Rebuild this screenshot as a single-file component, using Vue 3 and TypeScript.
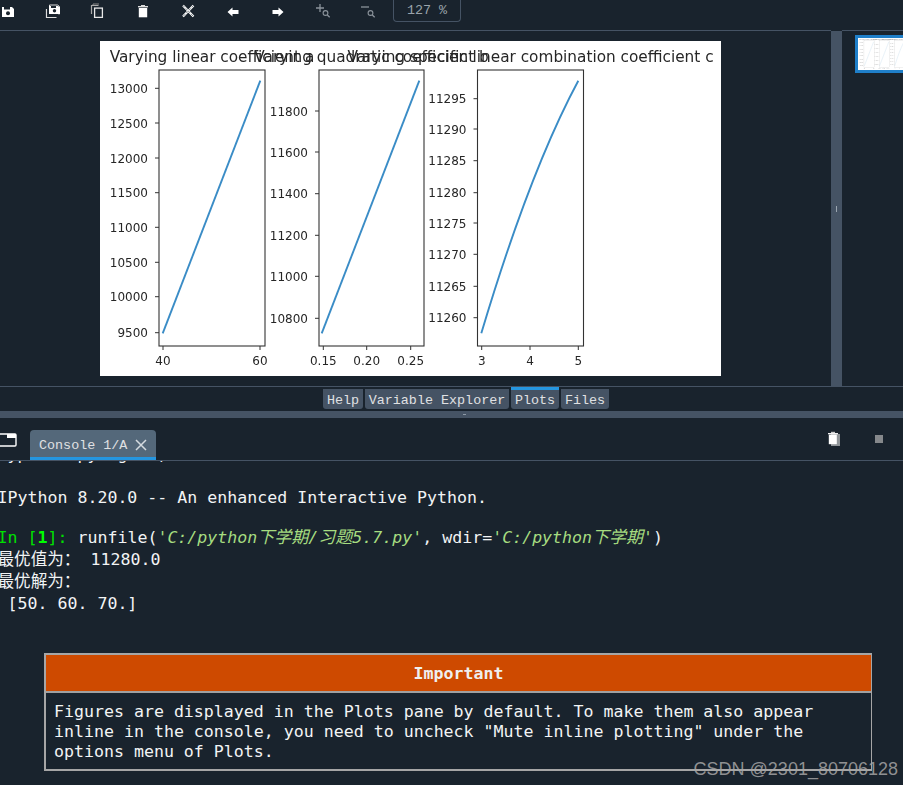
<script setup lang="ts">
interface Axis {
  left: number
  right: number
  title: string
  curve: string
  yTicks: { y: number; label: string }[]
  xTicks: { x: number; label: string }[]
}

const top = 70
const bottom = 346

const axes: Axis[] = [
  {
    left: 159,
    right: 265,
    title: 'Varying linear coefficient a',
    curve: 'M162.7 333.3 L260.3 80.7',
    yTicks: [
      { y: 88.3, label: '13000' },
      { y: 123, label: '12500' },
      { y: 158, label: '12000' },
      { y: 192.7, label: '11500' },
      { y: 227.3, label: '11000' },
      { y: 262.3, label: '10500' },
      { y: 296.7, label: '10000' },
      { y: 332.7, label: '9500' }
    ],
    xTicks: [
      { x: 163, label: '40' },
      { x: 260, label: '60' }
    ]
  },
  {
    left: 319,
    right: 424,
    title: 'Varying quadratic coefficient b',
    curve: 'M321.7 333.3 L419.3 80.7',
    yTicks: [
      { y: 111, label: '11800' },
      { y: 152, label: '11600' },
      { y: 193.7, label: '11400' },
      { y: 235.3, label: '11200' },
      { y: 276.3, label: '11000' },
      { y: 318.3, label: '10800' }
    ],
    xTicks: [
      { x: 323.3, label: '0.15' },
      { x: 366.7, label: '0.20' },
      { x: 410.7, label: '0.25' }
    ]
  },
  {
    left: 477.5,
    right: 583.5,
    title: 'Varying specific linear combination coefficient c',
    curve: 'M481.3 333.3 Q529.8 171 578.3 80.7',
    yTicks: [
      { y: 98.7, label: '11295' },
      { y: 129, label: '11290' },
      { y: 160.7, label: '11285' },
      { y: 192.7, label: '11280' },
      { y: 223, label: '11275' },
      { y: 254.3, label: '11270' },
      { y: 286.3, label: '11265' },
      { y: 317.7, label: '11260' }
    ],
    xTicks: [
      { x: 481.7, label: '3' },
      { x: 530, label: '4' },
      { x: 578.3, label: '5' }
    ]
  }
]

const tabs = [
  { name: 'Help', width: 40, active: false },
  { name: 'Variable Explorer', width: 144, active: false },
  { name: 'Plots', width: 48, active: true },
  { name: 'Files', width: 48, active: false }
]

const noticeLines = [
  'Figures are displayed in the Plots pane by default. To make them also appear',
  'inline in the console, you need to uncheck "Mute inline plotting" under the',
  'options menu of Plots.'
]
</script>

<template>
  <div class="app">
    <header class="toolbar">
      <button class="tool">
        <svg viewBox="0 0 16 16"><path d="M2 5h10l2 2v8H2z" fill="#fff" /><rect x="4" y="5" width="6" height="2.5" fill="#19232d" /><circle cx="8" cy="11.2" r="2" fill="#19232d" /></svg>
      </button>
      <button class="tool">
        <svg viewBox="0 0 16 16"><path d="M4.5 4V3h8l2 1.5V12h-1" fill="none" stroke="#ddd" stroke-width="1" /><path d="M4 4h9l2 1.5V12H4z" fill="#fff" /><rect x="6" y="4" width="5" height="2" fill="#19232d" /><circle cx="9.5" cy="8.8" r="1.7" fill="#19232d" /><path d="M1.5 7v8.5h10" fill="none" stroke="#ddd" stroke-width="1.2" /><path d="M3 6v8h10" fill="none" stroke="#19232d" stroke-width="1" /></svg>
      </button>
      <button class="tool">
        <svg viewBox="0 0 16 16"><path d="M1.5 12V3.5h7" fill="none" stroke="#aaa" stroke-width="1.2" /><rect x="4.6" y="6.1" width="7.8" height="9.3" fill="none" stroke="#e8e8e8" stroke-width="1.3" /><path d="M3 3V2h6" fill="none" stroke="#888" stroke-width="1" /></svg>
      </button>
      <button class="tool">
        <svg viewBox="0 0 16 16"><rect x="3" y="4" width="10" height="1.4" fill="#ddd" /><rect x="6" y="3" width="4" height="1.2" fill="#ddd" /><path d="M3.8 6h8.4v9.3H3.8z" fill="#fff" /></svg>
      </button>
      <button class="tool">
        <svg viewBox="0 0 16 16"><path d="M3 3.5L13.5 14.5M13.5 3.5L3 14.5" stroke="#fff" stroke-width="2.2" /><path d="M3 3.5L13.5 14.5M13.5 3.5L3 14.5" stroke="#19232d" stroke-width="0.6" stroke-dasharray="2.5 1.5" /></svg>
      </button>
      <button class="tool">
        <svg viewBox="0 0 16 16"><path d="M2.5 10L7.5 5.5v2.5h6v4h-6v2.5z" fill="#fff" /></svg>
      </button>
      <button class="tool">
        <svg viewBox="0 0 16 16"><path d="M13.5 10L8.5 5.5v2.5h-6v4h6v2.5z" fill="#fff" /></svg>
      </button>
      <button class="tool">
        <svg viewBox="0 0 16 16"><path d="M5 2v8M1 6h8" stroke="#8b939b" stroke-width="1.3" /><circle cx="10.5" cy="11" r="2.4" fill="none" stroke="#8b939b" stroke-width="1.1" /><path d="M12.3 13l2.4 2.2" stroke="#8b939b" stroke-width="1.3" /></svg>
      </button>
      <button class="tool">
        <svg viewBox="0 0 16 16"><path d="M1 5h8" stroke="#8b939b" stroke-width="1.3" /><circle cx="10.5" cy="11" r="2.4" fill="none" stroke="#8b939b" stroke-width="1.1" /><path d="M12.3 13l2.4 2.2" stroke="#8b939b" stroke-width="1.3" /></svg>
      </button>
      <div class="zoom-box">127 %</div>
    </header>

    <section class="plots">
      <div class="canvas-pane">
        <svg class="figure" viewBox="100 41 621 335" width="621" height="335">
          <g id="fig">
            <rect x="100" y="41" width="621" height="335" fill="#fff" />
            <g v-for="axis in axes" :key="axis.title">
              <rect :x="axis.left" :y="top" :width="axis.right - axis.left" :height="bottom - top" fill="none" stroke="#333" stroke-width="1.1" />
              <path :d="axis.curve" fill="none" stroke="#3a8cc6" stroke-width="1.9" />
              <text class="title" :x="(axis.left + axis.right) / 2" y="62" text-anchor="middle">{{ axis.title }}</text>
              <g v-for="t in axis.yTicks" :key="t.label">
                <path :d="`M${axis.left - 4} ${t.y}H${axis.left}`" stroke="#333" stroke-width="1" />
                <text class="tick" :x="axis.left - 11" :y="t.y + 4.5" text-anchor="end">{{ t.label }}</text>
              </g>
              <g v-for="t in axis.xTicks" :key="t.label">
                <path :d="`M${t.x} ${bottom}v4`" stroke="#333" stroke-width="1" />
                <text class="tick" :x="t.x" y="365" text-anchor="middle">{{ t.label }}</text>
              </g>
            </g>
          </g>
        </svg>
      </div>
      <div class="splitter-v"><span class="grip-v"></span></div>
      <div class="thumb-pane">
        <div class="thumb">
          <svg viewBox="100 41 621 335" width="60" height="32"><use href="#fig" opacity="0.6" /></svg>
        </div>
      </div>
    </section>

    <nav class="tabs">
      <div
        v-for="tab in tabs"
        :key="tab.name"
        class="tab"
        :class="{ active: tab.active }"
        :style="{ width: tab.width + 'px' }"
      >{{ tab.name }}</div>
    </nav>

    <div class="splitter-h"><span class="grip-h"></span></div>

    <div class="console-bar">
      <svg class="window-icon" viewBox="0 0 17 14" width="17" height="14">
        <rect x="-1" y="1" width="17" height="12" rx="1" fill="none" stroke="#fff" stroke-width="1.4" />
        <rect x="7" y="1" width="9" height="4" fill="#fff" />
      </svg>
      <div class="console-tab">
        <span>Console 1/A</span>
        <svg viewBox="0 0 12 12" width="12" height="12"><path d="M1 1L11 11M11 1L1 11" stroke="#d5dbe0" stroke-width="1.5" /></svg>
      </div>
      <div class="console-actions">
        <svg viewBox="0 0 14 16" width="14" height="16">
          <rect x="4" y="3" width="9" height="12" fill="#8f9498" />
          <rect x="1" y="2" width="10" height="1.3" fill="#eee" />
          <rect x="4" y="0.8" width="4" height="1.2" fill="#ccc" />
          <rect x="1.8" y="3.6" width="8" height="9.6" fill="#fff" />
        </svg>
        <span class="stop"></span>
      </div>
    </div>

    <main class="console">
      <div class="row first">Type "copyright", "credits" or "license" for more information.</div>
      <div class="row spacer"></div>
      <div class="row">IPython 8.20.0 -- An enhanced Interactive Python.</div>
      <div class="row short"></div>
      <div class="row"><span class="prompt">In [<b>1</b>]: </span>runfile(<i class="str">'C:/python<span class="han">下学期</span>/<span class="han">习题</span>5.7.py'</i>, wdir=<i class="str">'C:/python<span class="han">下学期</span>'</i>)</div>
      <div class="row cjk gap">最优值为： 11280.0</div>
      <div class="row cjk">最优解为：</div>
      <div class="row gap"> [50. 60. 70.]</div>

      <aside class="notice">
        <div class="notice-head">Important</div>
        <div class="notice-body">
          <div v-for="line in noticeLines" :key="line" class="notice-line">{{ line }}</div>
        </div>
      </aside>
    </main>

    <div class="watermark">CSDN @2301_80706128</div>
  </div>
</template>

<style scoped>
.app {
  position: relative;
  width: 903px;
  height: 785px;
  overflow: hidden;
  background: #19232d;
  display: flex;
  flex-direction: column;
}

.toolbar {
  height: 30px;
  box-sizing: border-box;
  display: flex;
  align-items: flex-start;
  gap: 29px;
  flex: none;
}
.tool {
  width: 16px;
  height: 16px;
  margin-top: 2px;
  padding: 0;
  border: 0;
  background: none;
  display: block;
}
.tool svg {
  display: block;
  width: 16px;
  height: 16px;
}
.zoom-box {
  width: 68px;
  height: 22px;
  box-sizing: border-box;
  margin-left: -12px;
  border: 1px solid #455364;
  border-top: 0;
  border-radius: 0 0 4px 4px;
  color: #9aa3ab;
  font: 13.4px/22px "Liberation Mono", monospace;
  text-align: center;
}

.plots {
  height: 357px;
  flex: none;
  display: flex;
}
.canvas-pane {
  width: 831px;
  flex: none;
  box-sizing: border-box;
  border-top: 1px solid #455364;
  border-bottom: 1px solid #455364;
  padding: 10px 0 0 100px;
}
.figure {
  display: block;
  filter: blur(0.4px);
}
.title {
  font: 15.3px "DejaVu Sans", sans-serif;
  fill: #262626;
}
.tick {
  font: 12px "DejaVu Sans", sans-serif;
  fill: #262626;
}
.splitter-v {
  width: 11px;
  flex: none;
  margin-top: 1px;
  background: #455364;
  display: flex;
  align-items: center;
  justify-content: center;
}
.grip-v {
  width: 1px;
  height: 6px;
  background: #9aa5b0;
}
.thumb-pane {
  flex: 1;
  min-width: 0;
  overflow: hidden;
  box-sizing: border-box;
  border-top: 1px solid #455364;
  border-bottom: 1px solid #455364;
  padding: 4px 0 0 13px;
}
.thumb {
  width: 60px;
  height: 32px;
  border: 3px solid #1f7fc9;
  background: #fff;
}
.thumb svg {
  display: block;
}

.tabs {
  height: 24px;
  flex: none;
  box-sizing: border-box;
  padding: 0 0 2px 323px;
  display: flex;
  align-items: flex-end;
  gap: 2px;
}
.tab {
  height: 20px;
  box-sizing: border-box;
  background: #455364;
  border-radius: 0 0 3px 3px;
  color: #e0e1e3;
  font: 13.4px/23px "Liberation Mono", monospace;
  text-align: center;
  white-space: nowrap;
}
.tab.active {
  height: 22px;
  border-top: 3px solid #2596e0;
  line-height: 21px;
}

.splitter-h {
  height: 7px;
  flex: none;
  box-sizing: border-box;
  padding-left: 463px;
  background: #455364;
  display: flex;
  align-items: center;
}
.grip-h {
  width: 3px;
  height: 1px;
  background: #8d99a5;
}

.console-bar {
  height: 43px;
  flex: none;
  box-sizing: border-box;
  border-bottom: 1px solid #455364;
  display: flex;
  align-items: flex-end;
  position: relative;
}
.window-icon {
  position: absolute;
  left: 0;
  top: 15px;
}
.console-tab {
  margin-left: 30px;
  width: 126px;
  height: 30px;
  box-sizing: border-box;
  padding: 3px 0 0 9px;
  background: #54687a;
  border-bottom: 3px solid #2596e0;
  border-radius: 4px 4px 0 0;
  display: flex;
  align-items: center;
  gap: 8px;
  color: #e0e1e3;
  font: 13.4px "Liberation Mono", monospace;
  white-space: nowrap;
}
.console-actions {
  margin-left: auto;
  margin-right: 20px;
  margin-bottom: 13px;
  display: flex;
  align-items: center;
  gap: 34px;
}
.console-actions svg {
  display: block;
}
.stop {
  width: 8px;
  height: 8px;
  background: #85888b;
}

.console {
  flex: 1;
  min-height: 0;
  overflow: hidden;
  color: #f2f4f5;
  font: 16.6px "DejaVu Sans Mono", "Noto Sans CJK SC", monospace;
}
.row {
  height: 20px;
  line-height: 20px;
  margin-left: -2.5px;
  white-space: pre;
}
.row.first {
  margin-top: -16px;
}
.row.spacer {
  height: 23px;
}
.row.short {
  height: 19px;
}
.row.cjk {
  height: 22px;
  line-height: 22px;
}
.row.gap {
  margin-top: 1px;
}
.row.cjk.gap {
  margin-top: 2px;
}
.prompt {
  color: #00e000;
}
.prompt b {
  color: #00ff00;
}
.str {
  color: #a6dc80;
  font-style: italic;
}
.han {
  font-size: 17px;
}

.notice {
  margin: 39px 0 0 44px;
  width: 828px;
  height: 118px;
  box-sizing: border-box;
  border: 2px solid #a6a6a6;
  border-right-width: 1px;
  display: flex;
  flex-direction: column;
}
.notice-head {
  height: 38px;
  flex: none;
  box-sizing: border-box;
  padding-top: 1px;
  background: #ce4a00;
  border-bottom: 2px solid #a0a0a0;
  color: #efefef;
  font-weight: 700;
  line-height: 35px;
  text-align: center;
}
.notice-body {
  padding: 9px 0 0 8px;
}
.notice-line {
  line-height: 20px;
  white-space: pre;
}

.watermark {
  position: absolute;
  right: 5px;
  top: 759px;
  color: rgba(165, 165, 165, 0.85);
  font: 18px/21px "Liberation Sans", sans-serif;
  white-space: nowrap;
}
</style>

<style>
html,
body {
  margin: 0;
  background: #19232d;
}
</style>
